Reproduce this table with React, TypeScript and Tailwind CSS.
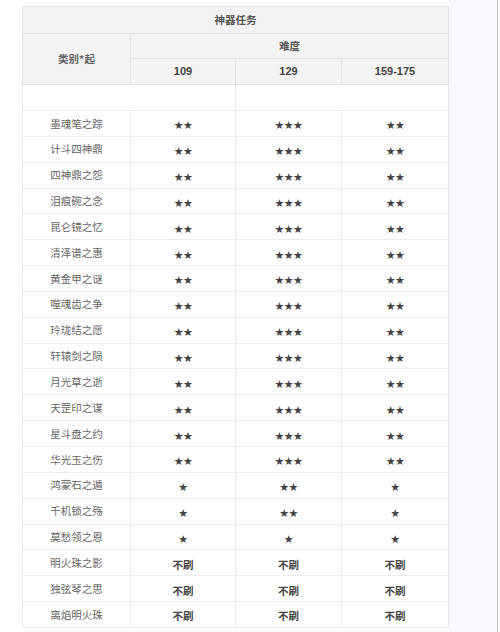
// 神器任务难度表
const rows: [string, string, string, string][] = [
  ['墨魂笔之踪', '★★', '★★★', '★★'],
  ['计斗四神鼎', '★★', '★★★', '★★'],
  ['四神鼎之怨', '★★', '★★★', '★★'],
  ['泪痕碗之念', '★★', '★★★', '★★'],
  ['昆仑镜之忆', '★★', '★★★', '★★'],
  ['清泽谱之惠', '★★', '★★★', '★★'],
  ['黄金甲之谜', '★★', '★★★', '★★'],
  ['噬魂齿之争', '★★', '★★★', '★★'],
  ['玲珑结之愿', '★★', '★★★', '★★'],
  ['轩辕剑之陨', '★★', '★★★', '★★'],
  ['月光草之逝', '★★', '★★★', '★★'],
  ['天罡印之谋', '★★', '★★★', '★★'],
  ['星斗盘之约', '★★', '★★★', '★★'],
  ['华光玉之伤', '★★', '★★★', '★★'],
  ['鸿蒙石之遁', '★', '★★', '★'],
  ['千机锁之殇', '★', '★★', '★'],
  ['莫愁领之恩', '★', '★', '★'],
  ['明火珠之影', '不刷', '不刷', '不刷'],
  ['独弦琴之思', '不刷', '不刷', '不刷'],
  ['离焰明火珠', '不刷', '不刷', '不刷'],
];

const cjk = "font-['Noto_Sans_CJK_SC',sans-serif]";

function Value({ v }: { v: string }) {
  if (v === '不刷') {
    return <span className={`${cjk} text-[10.5px] font-bold text-[#444]`}>{v}</span>;
  }
  return <span className="font-['DejaVu_Sans',sans-serif] text-[11px] text-[#444] tracking-[-0.6px]">{v}</span>;
}

export default function App() {
  return (
    <div className="flex w-[500px] h-[632px] bg-white">
      <div className="pl-[22px] pt-[6px]">
        <table className="w-[426px] border-collapse table-fixed border border-[#e3e3e3]">
          <colgroup>
            <col className="w-[108px]" />
            <col className="w-[105px]" />
            <col className="w-[106px]" />
            <col className="w-[107px]" />
          </colgroup>
          <thead className="bg-[#f3f3f3]">
            <tr className="h-[27px]">
              <th colSpan={4} className={`${cjk} text-[10.5px] font-bold text-[#555] border border-[#e3e3e3]`}>
                神器任务
              </th>
            </tr>
            <tr className="h-[25px]">
              <th rowSpan={2} className={`${cjk} text-[10.5px] font-bold text-[#666] border border-[#e3e3e3]`}>
                类别*起
              </th>
              <th colSpan={3} className={`${cjk} text-[10.5px] font-bold text-[#555] border border-[#e3e3e3]`}>
                难度
              </th>
            </tr>
            <tr className="h-[26px] font-['Liberation_Sans',sans-serif] text-[11px] font-bold text-[#444]">
              <th className="border border-[#e3e3e3]">109</th>
              <th className="border border-[#e3e3e3]">129</th>
              <th className="border border-[#e3e3e3]">159-175</th>
            </tr>
          </thead>
          <tbody>
            <tr className="h-[26px]">
              <td colSpan={2} className="border border-[#ececec]" />
              <td colSpan={2} className="border border-[#ececec]" />
            </tr>
            {rows.map(([name, a, b, c]) => (
              <tr key={name} className="h-[25.85px] text-center">
                <td className={`${cjk} text-[10.5px] text-[#666] border border-[#ececec]`}>{name}</td>
                <td className="border border-[#ececec]"><Value v={a} /></td>
                <td className="border border-[#ececec]"><Value v={b} /></td>
                <td className="border border-[#ececec]"><Value v={c} /></td>
              </tr>
            ))}
          </tbody>
        </table>
      </div>
      <div className="flex-1 bg-[#f8fbfc] border-r border-[#b8bcbf] mr-[2px]" />
    </div>
  );
}
